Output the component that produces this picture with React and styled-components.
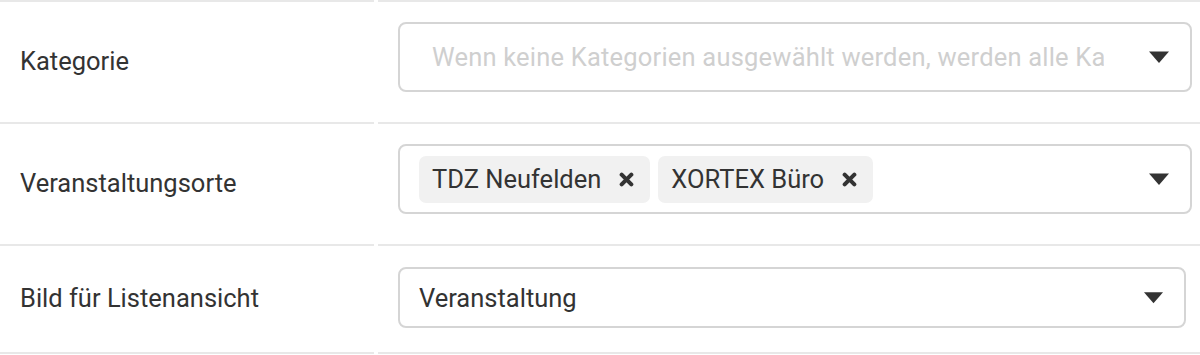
import styled, { createGlobalStyle } from 'styled-components'

const GlobalStyle = createGlobalStyle`
    html, body {
        margin: 0;
        padding: 0;
        background: #fff;
    }
    body {
        font-family: Roboto, "Liberation Sans", sans-serif;
        color: #333;
        overflow: hidden;
    }
`

const App = () => {
    return (
        <>
            <GlobalStyle />
            <Form>
                <Row>
                    <Label>Kategorie</Label>
                    <Field $pad="20px 8px 30px 20px">
                        <SelectBox $height="70px">
                            <Placeholder>Wenn keine Kategorien ausgewählt werden, werden alle Kategorien angezeigt</Placeholder>
                            <Arrow />
                        </SelectBox>
                    </Field>
                </Row>
                <Row>
                    <Label>Veranstaltungsorte</Label>
                    <Field $pad="20px 8px 30px 20px">
                        <SelectBox $height="70px">
                            <Tags>
                                <Tag>TDZ Neufelden<Remove /></Tag>
                                <Tag>XORTEX Büro<Remove /></Tag>
                            </Tags>
                            <Arrow />
                        </SelectBox>
                    </Field>
                </Row>
                <Row $last>
                    <Label>Bild für Listenansicht</Label>
                    <Field $pad="21px 14px 24px 20px">
                        <SelectBox $height="61px">
                            <Value>Veranstaltung</Value>
                            <Arrow $small />
                        </SelectBox>
                    </Field>
                </Row>
            </Form>
        </>
    )
}

const Remove = () => (
    <RemoveIcon viewBox="0 0 14 14" aria-hidden="true">
        <path d="M2.5 2.5 L11.5 11.5 M11.5 2.5 L2.5 11.5" stroke="#333" strokeWidth="3.8" strokeLinecap="round" />
    </RemoveIcon>
)

const Arrow = ({ $small }) => (
    <ArrowIcon viewBox="0 0 22 14" $small={$small} aria-hidden="true">
        <path d="M1 1.5 H21 L11 13 Z" fill="#333" />
    </ArrowIcon>
)

const Form = styled.div`
    width: 1200px;
`

const Row = styled.div`
    display: grid;
    grid-template-columns: 374px minmax(0, 1fr);
    column-gap: 4px;
    & > div {
        border-top: 2px solid #e8e8e8;
        border-bottom: ${p => (p.$last ? '2px solid #e8e8e8' : 'none')};
    }
`

const Label = styled.div`
    display: flex;
    align-items: center;
    padding: 0 0 2px 20px;
    font-size: 25.5px;
    color: #333;
`

const Field = styled.div`
    min-width: 0;
    padding: ${p => p.$pad};
`

const SelectBox = styled.div`
    box-sizing: border-box;
    height: ${p => p.$height};
    border: 2px solid #d5d5d5;
    border-radius: 8px;
    display: flex;
    align-items: center;
    padding: 0 20px 0 19px;
    background: #fff;
`

const Placeholder = styled.div`
    flex: 1;
    min-width: 0;
    padding-left: 13px;
    margin-right: 44px;
    font-size: 25.5px;
    letter-spacing: 0.2px;
    color: #cfcfcf;
    white-space: nowrap;
    overflow: hidden;
`

const Value = styled.div`
    flex: 1;
    font-size: 25.5px;
    color: #333;
`

const Tags = styled.div`
    flex: 1;
    display: flex;
    gap: 8px;
`

const Tag = styled.div`
    display: flex;
    align-items: center;
    height: 47px;
    padding: 0 16px 0 13px;
    border-radius: 7px;
    background: #f1f1f1;
    font-size: 25.5px;
    color: #333;
`

const RemoveIcon = styled.svg`
    width: 15px;
    height: 15px;
    margin-left: 18px;
`

const ArrowIcon = styled.svg`
    width: ${p => (p.$small ? '21px' : '22px')};
    height: ${p => (p.$small ? '15px' : '14px')};
    flex-shrink: 0;
`

export default App
